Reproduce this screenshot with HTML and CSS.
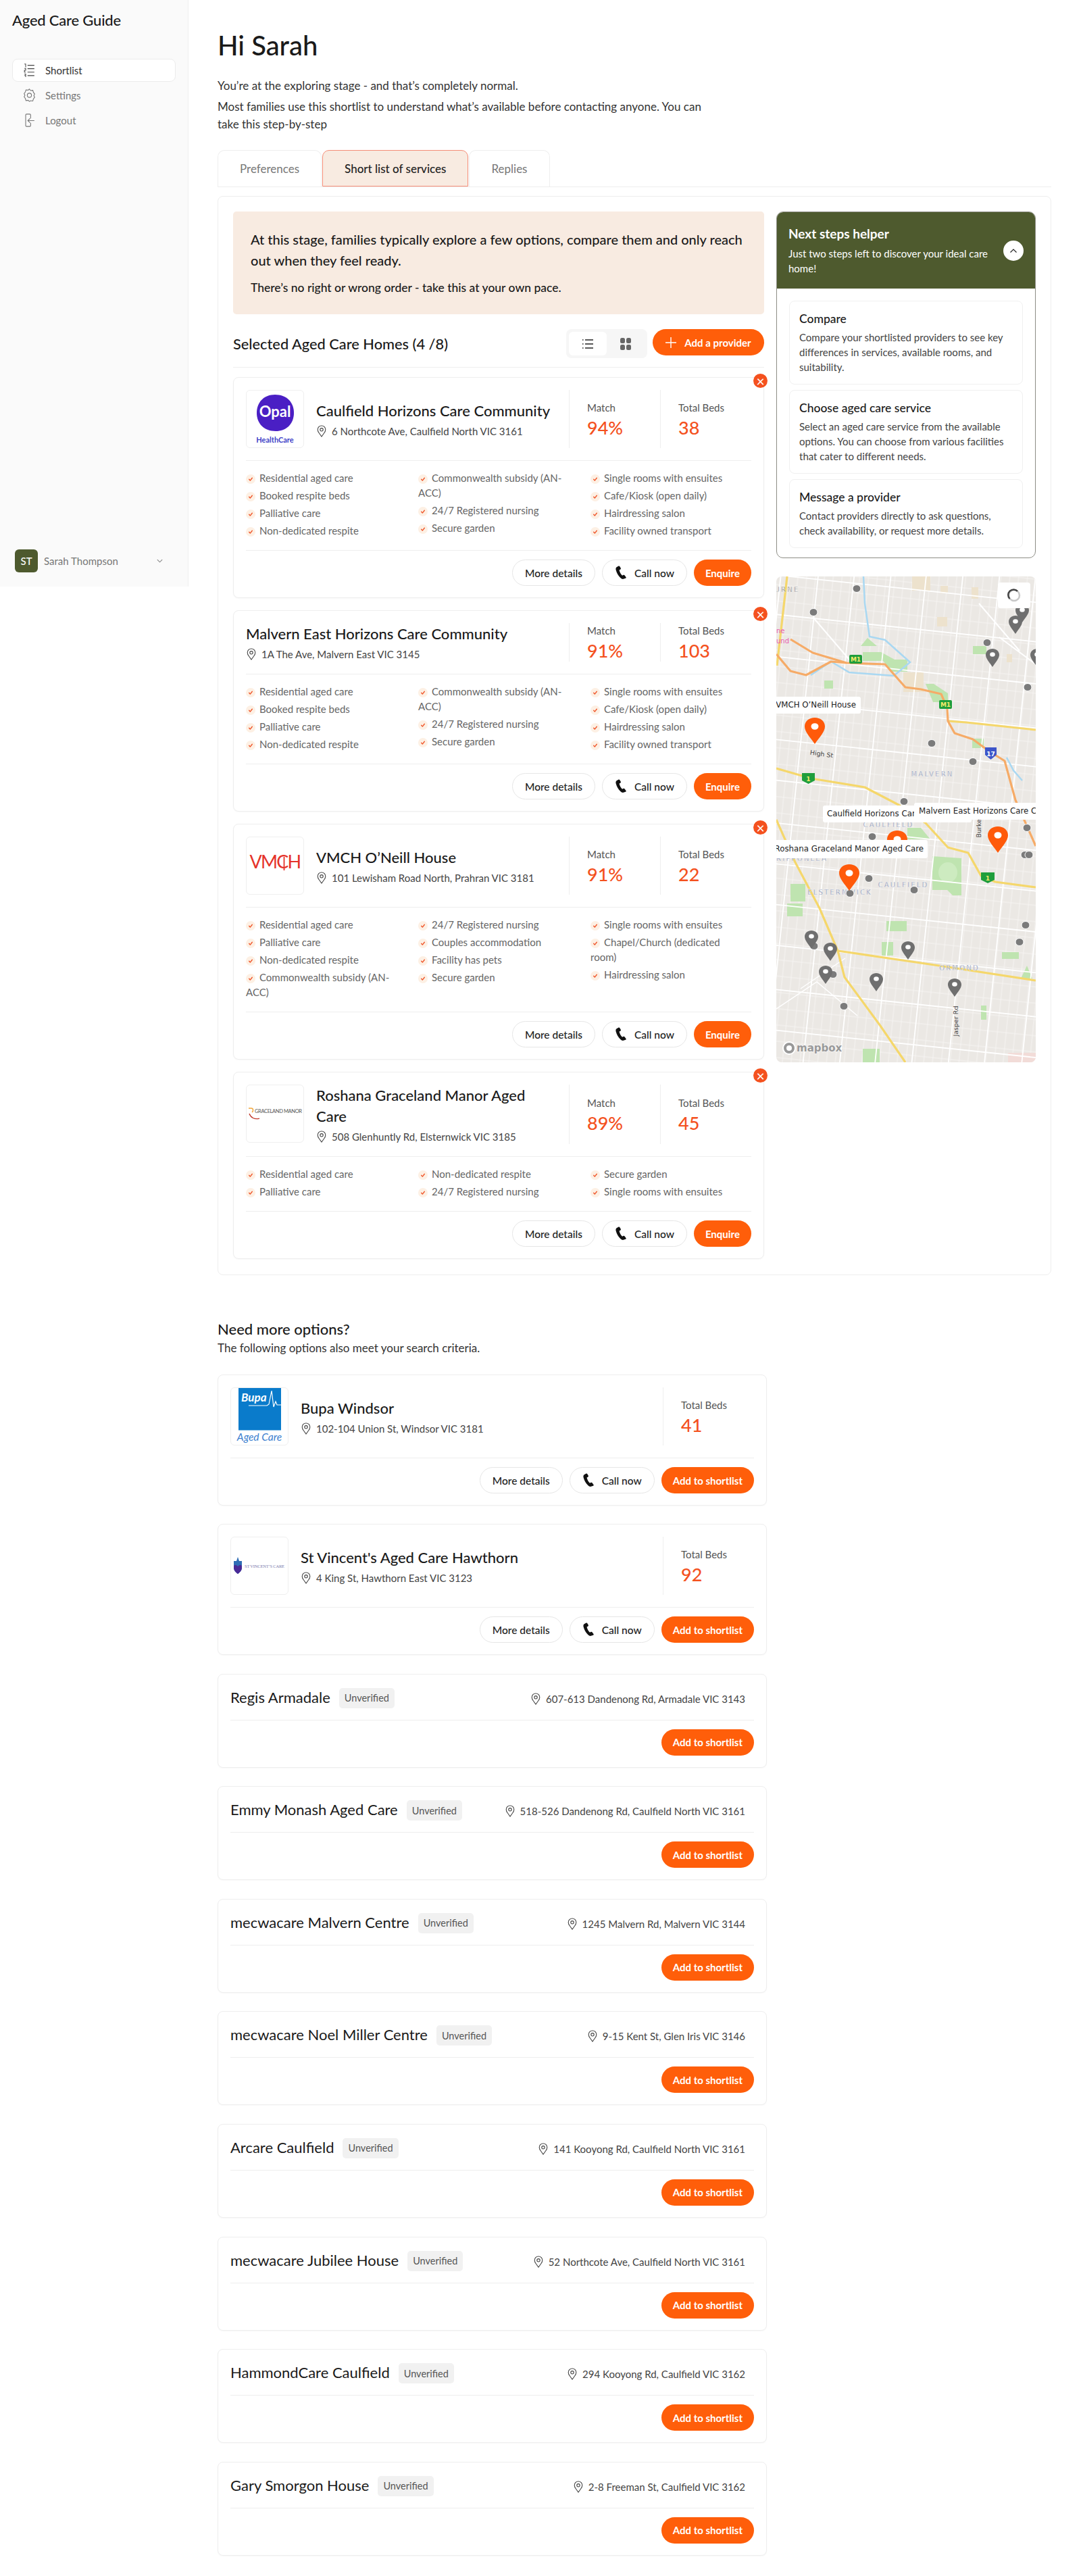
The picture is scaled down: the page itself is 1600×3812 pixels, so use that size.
FILE: index.html
```html
<!DOCTYPE html>
<html lang="en">
<head>
    <meta charset="UTF-8">
    <meta name="viewport" content="width=device-width, initial-scale=1.0">
    <title>Aged Care Guide - Shortlist</title>
    <link rel="stylesheet" href="styles.css">
</head>
<body>
    <!-- shared icons -->
    <svg class="sprite" width="0" height="0">
        <symbol id="pin" viewBox="0 0 14 18"><path d="M7 1C3.7 1 1.2 3.5 1.2 6.7c0 2.1.9 3.7 2.2 5.3L7 17l3.6-5c1.3-1.6 2.2-3.2 2.2-5.3C12.8 3.5 10.3 1 7 1z" fill="none" stroke="currentColor" stroke-width="1.1"/><circle cx="7" cy="6.8" r="2.2" fill="none" stroke="currentColor" stroke-width="1.1"/></symbol>
        <symbol id="check" viewBox="0 0 14 14"><circle cx="7" cy="7" r="7" fill="#fdf0e4"/><path d="M4.7 7.3l1.6 1.8 3-3.8" fill="none" stroke="#f0562a" stroke-width="1.4" stroke-linecap="round" stroke-linejoin="round"/></symbol>
        <symbol id="phone" viewBox="0 0 22 24"><path d="M5.8 1.2L2.9 2.9C1.6 3.7 1.3 5.6 1.8 7.5c1.3 4.800 3.700 9 7.300 12.700 1.500 1.500 3.300 2.500 4.900 2.100l3.400-1.100c1-.4 1.300-1.300.7-2.100l-2.200-3c-.5-.7-1.300-.8-2-.4l-1.700 1c-2.600-2.300-4.300-5.400-5-9l1.800-1c.7-.4 1-1.200.7-2L8.200 2c-.4-1-1.500-1.400-2.400-.8z" fill="#111"/></symbol>
        <symbol id="gpin" viewBox="0 0 20 27"><path d="M10 0C4.500 0 0 3.800 0 9c0 5.500 5.500 11 10 18 4.500-7 10-12.500 10-18C20 3.800 15.500 0 10 0z" fill="#6f6f6f"/><ellipse cx="10" cy="8.5" rx="3.8" ry="3.3" fill="#fff"/></symbol>
        <symbol id="opin" viewBox="0 0 30 39"><path d="M15 0C6.700 0 0 5.200 0 13c0 8 8 16 15 26 7-10 15-18 15-26C30 5.200 23.300 0 15 0z" fill="#ff5a0a"/><ellipse cx="15" cy="13" rx="5.500" ry="4.800" fill="#fff"/></symbol>
    </svg>

    <div class="layout">
        <aside class="sidebar">
            <div class="brand">Aged Care Guide</div>
            <nav class="side-nav">
                <a class="nav-item active">
                    <svg class="nav-icon" viewBox="0 0 18 24" fill="none" stroke="#444" stroke-width="1.3"><path d="M6 4h11M6 9.500h11M6 15h11M6 20.500h11"/><path d="M1 2h2v5M1 9h2v3H1v3h2M1 18h2v5M1 20.500h2" stroke-width="1.1"/></svg>
                    Shortlist
                </a>
                <a class="nav-item">
                    <svg class="nav-icon" viewBox="0 0 18 24" fill="none" stroke="#777" stroke-width="1.2"><path d="M9 2l2 2.400 3.500-.4 1 3.300 2 2.700-1.300 2.500 1.300 2.700-2 2.700-1 3.300-3.500-.4L9 22l-2-1.900-3.500.4-1-3.300-2-2.700L1.800 12 .5 9.300l2-2.700 1-3.300 3.500.4z"/><circle cx="9" cy="12" r="3.4"/></svg>
                    Settings
                </a>
                <a class="nav-item">
                    <svg class="nav-icon" viewBox="0 0 18 24" fill="none" stroke="#777" stroke-width="1.2"><path d="M11 9V3.500c0-1-.8-1.500-1.500-1.500H4.500C3.500 2 3 2.800 3 3.500v17c0 1 .7 1.500 1.500 1.500h5c1 0 1.500-.7 1.500-1.500V16"/><path d="M17 12.500H7M10 9l-3.500 3.500L10 16"/></svg>
                    Logout
                </a>
            </nav>
            <div class="side-user">
                <span class="avatar">ST</span>
                <span class="user-name">Sarah Thompson</span>
                <svg class="user-chevron" viewBox="0 0 12 8" fill="none" stroke="#888" stroke-width="1.2"><path d="M2 2l4 4 4-4"/></svg>
            </div>
        </aside>

        <main class="main">
            <h1>Hi Sarah</h1>
            <p class="intro first">You’re at the exploring stage - and that’s completely normal.</p>
            <p class="intro">Most families use this shortlist to understand what’s available before contacting anyone. You can take this step-by-step</p>

            <div class="tabs">
                <a class="tab">Preferences</a>
                <a class="tab active">Short list of services</a>
                <a class="tab">Replies</a>
            </div>

            <section class="panel">
                <div class="panel-left">
                    <div class="alert">
                        <p class="alert-main">At this stage, families typically explore a few options, compare them and only reach out when they feel ready.</p>
                        <p class="alert-sub">There’s no right or wrong order - take this at your own pace.</p>
                    </div>

                    <div class="list-head">
                        <h2>Selected Aged Care Homes (4 /8)</h2>
                        <div class="view-toggle">
                            <span class="toggle-btn on">
                                <svg viewBox="0 0 18 18" fill="none" stroke="#222" stroke-width="1.3"><path d="M5 3h12M5 9h12M5 15h12M1 3h1.500M1 9h1.500M1 15h1.500"/></svg>
                            </span>
                            <span class="toggle-btn">
                                <svg viewBox="0 0 18 18" fill="#666"><rect x="1" y="0" width="7" height="8" rx="2.5"/><rect x="10" y="0" width="7" height="8" rx="2.5"/><rect x="1" y="10" width="7" height="8" rx="2.5"/><rect x="10" y="10" width="7" height="8" rx="2.5"/></svg>
                            </span>
                        </div>
                        <a class="btn primary add-provider">
                            <svg viewBox="0 0 16 16" fill="none" stroke="#fff" stroke-width="1.4"><path d="M8 0v16M0 8h16"/></svg>
                            Add a provider
                        </a>
                    </div>

                    <article class="card">
                        <span class="remove">×</span>
                        <div class="card-top">
                            <div class="logo-box">
                                <svg viewBox="0 0 84 84" width="84" height="84">
                                    <path d="M42 6c17 0 28 11 28 27 0 17-12 27-27 27C26 60 15 49 15 33 15 17 26 6 42 6z" fill="#4a1fc4"/>
                                    <text x="42" y="39" text-anchor="middle" class="lg-opal">Opal</text>
                                    <text x="42" y="77" text-anchor="middle" class="lg-health">HealthCare</text>
                                </svg>
                            </div>
                            <div class="home-info">
                                <h3>Caulfield Horizons Care Community</h3>
                                <div class="address"><svg class="pin"><use href="#pin"/></svg>6 Northcote Ave, Caulfield North VIC 3161</div>
                            </div>
                            <div class="stat"><span class="stat-label">Match</span><span class="stat-value">94%</span></div>
                            <div class="stat"><span class="stat-label">Total Beds</span><span class="stat-value">38</span></div>
                        </div>
                        <div class="features">
                            <ul>
                                <li><svg class="tick"><use href="#check"/></svg>Residential aged care</li>
                                <li><svg class="tick"><use href="#check"/></svg>Booked respite beds</li>
                                <li><svg class="tick"><use href="#check"/></svg>Palliative care</li>
                                <li><svg class="tick"><use href="#check"/></svg>Non-dedicated respite</li>
                            </ul>
                            <ul>
                                <li><svg class="tick"><use href="#check"/></svg>Commonwealth subsidy (AN-ACC)</li>
                                <li><svg class="tick"><use href="#check"/></svg>24/7 Registered nursing</li>
                                <li><svg class="tick"><use href="#check"/></svg>Secure garden</li>
                            </ul>
                            <ul>
                                <li><svg class="tick"><use href="#check"/></svg>Single rooms with ensuites</li>
                                <li><svg class="tick"><use href="#check"/></svg>Cafe/Kiosk (open daily)</li>
                                <li><svg class="tick"><use href="#check"/></svg>Hairdressing salon</li>
                                <li><svg class="tick"><use href="#check"/></svg>Facility owned transport</li>
                            </ul>
                        </div>
                        <div class="actions">
                            <a class="btn ghost">More details</a>
                            <a class="btn ghost"><svg class="phone"><use href="#phone"/></svg>Call now</a>
                            <a class="btn primary">Enquire</a>
                        </div>
                    </article>

                    <article class="card">
                        <span class="remove">×</span>
                        <div class="card-top">
                            <div class="home-info">
                                <h3>Malvern East Horizons Care Community</h3>
                                <div class="address"><svg class="pin"><use href="#pin"/></svg>1A The Ave, Malvern East VIC 3145</div>
                            </div>
                            <div class="stat"><span class="stat-label">Match</span><span class="stat-value">91%</span></div>
                            <div class="stat"><span class="stat-label">Total Beds</span><span class="stat-value">103</span></div>
                        </div>
                        <div class="features">
                            <ul>
                                <li><svg class="tick"><use href="#check"/></svg>Residential aged care</li>
                                <li><svg class="tick"><use href="#check"/></svg>Booked respite beds</li>
                                <li><svg class="tick"><use href="#check"/></svg>Palliative care</li>
                                <li><svg class="tick"><use href="#check"/></svg>Non-dedicated respite</li>
                            </ul>
                            <ul>
                                <li><svg class="tick"><use href="#check"/></svg>Commonwealth subsidy (AN-ACC)</li>
                                <li><svg class="tick"><use href="#check"/></svg>24/7 Registered nursing</li>
                                <li><svg class="tick"><use href="#check"/></svg>Secure garden</li>
                            </ul>
                            <ul>
                                <li><svg class="tick"><use href="#check"/></svg>Single rooms with ensuites</li>
                                <li><svg class="tick"><use href="#check"/></svg>Cafe/Kiosk (open daily)</li>
                                <li><svg class="tick"><use href="#check"/></svg>Hairdressing salon</li>
                                <li><svg class="tick"><use href="#check"/></svg>Facility owned transport</li>
                            </ul>
                        </div>
                        <div class="actions">
                            <a class="btn ghost">More details</a>
                            <a class="btn ghost"><svg class="phone"><use href="#phone"/></svg>Call now</a>
                            <a class="btn primary">Enquire</a>
                        </div>
                    </article>

                    <article class="card">
                        <span class="remove">×</span>
                        <div class="card-top">
                            <div class="logo-box">
                                <svg viewBox="0 0 84 84" width="84" height="84">
                                    <text x="42" y="46" text-anchor="middle" class="lg-vmch">VMCH</text>
                                    <path d="M55.5 29v20" stroke="#e5332a" stroke-width="1.8"/>
                                </svg>
                            </div>
                            <div class="home-info">
                                <h3>VMCH O’Neill House</h3>
                                <div class="address"><svg class="pin"><use href="#pin"/></svg>101 Lewisham Road North, Prahran VIC 3181</div>
                            </div>
                            <div class="stat"><span class="stat-label">Match</span><span class="stat-value">91%</span></div>
                            <div class="stat"><span class="stat-label">Total Beds</span><span class="stat-value">22</span></div>
                        </div>
                        <div class="features">
                            <ul>
                                <li><svg class="tick"><use href="#check"/></svg>Residential aged care</li>
                                <li><svg class="tick"><use href="#check"/></svg>Palliative care</li>
                                <li><svg class="tick"><use href="#check"/></svg>Non-dedicated respite</li>
                                <li><svg class="tick"><use href="#check"/></svg>Commonwealth subsidy (AN-ACC)</li>
                            </ul>
                            <ul>
                                <li><svg class="tick"><use href="#check"/></svg>24/7 Registered nursing</li>
                                <li><svg class="tick"><use href="#check"/></svg>Couples accommodation</li>
                                <li><svg class="tick"><use href="#check"/></svg>Facility has pets</li>
                                <li><svg class="tick"><use href="#check"/></svg>Secure garden</li>
                            </ul>
                            <ul>
                                <li><svg class="tick"><use href="#check"/></svg>Single rooms with ensuites</li>
                                <li><svg class="tick"><use href="#check"/></svg>Chapel/Church (dedicated room)</li>
                                <li><svg class="tick"><use href="#check"/></svg>Hairdressing salon</li>
                            </ul>
                        </div>
                        <div class="actions">
                            <a class="btn ghost">More details</a>
                            <a class="btn ghost"><svg class="phone"><use href="#phone"/></svg>Call now</a>
                            <a class="btn primary">Enquire</a>
                        </div>
                    </article>

                    <article class="card">
                        <span class="remove">×</span>
                        <div class="card-top">
                            <div class="logo-box">
                                <svg viewBox="0 0 84 84" width="84" height="84">
                                    <path d="M3 34h4c3 0 3.500 4 1 6" fill="none" stroke="#f0a63c" stroke-width="1.5"/>
                                    <path d="M4 42c2 6 8 9 15 7" fill="none" stroke="#c0392b" stroke-width="1.3"/>
                                    <text x="12" y="41" class="lg-grace" textLength="70">GRACELAND MANOR</text>
                                </svg>
                            </div>
                            <div class="home-info">
                                <h3>Roshana Graceland Manor Aged Care</h3>
                                <div class="address"><svg class="pin"><use href="#pin"/></svg>508 Glenhuntly Rd, Elsternwick VIC 3185</div>
                            </div>
                            <div class="stat"><span class="stat-label">Match</span><span class="stat-value">89%</span></div>
                            <div class="stat"><span class="stat-label">Total Beds</span><span class="stat-value">45</span></div>
                        </div>
                        <div class="features">
                            <ul>
                                <li><svg class="tick"><use href="#check"/></svg>Residential aged care</li>
                                <li><svg class="tick"><use href="#check"/></svg>Palliative care</li>
                            </ul>
                            <ul>
                                <li><svg class="tick"><use href="#check"/></svg>Non-dedicated respite</li>
                                <li><svg class="tick"><use href="#check"/></svg>24/7 Registered nursing</li>
                            </ul>
                            <ul>
                                <li><svg class="tick"><use href="#check"/></svg>Secure garden</li>
                                <li><svg class="tick"><use href="#check"/></svg>Single rooms with ensuites</li>
                            </ul>
                        </div>
                        <div class="actions">
                            <a class="btn ghost">More details</a>
                            <a class="btn ghost"><svg class="phone"><use href="#phone"/></svg>Call now</a>
                            <a class="btn primary">Enquire</a>
                        </div>
                    </article>
                </div>

                <div class="panel-right">
                    <div class="helper">
                        <div class="helper-head">
                            <div>
                                <h4>Next steps helper</h4>
                                <p>Just two steps left to discover your ideal care home!</p>
                            </div>
                            <span class="helper-toggle">
                                <svg viewBox="0 0 12 8" fill="none" stroke="#222" stroke-width="1.2"><path d="M1.5 6.5L6 2l4.5 4.5"/></svg>
                            </span>
                        </div>
                        <div class="helper-body">
                            <div class="step">
                                <h5>Compare</h5>
                                <p>Compare your shortlisted providers to see key differences in services, available rooms, and suitability.</p>
                            </div>
                            <div class="step">
                                <h5>Choose aged care service</h5>
                                <p>Select an aged care service from the available options. You can choose from various facilities that cater to different needs.</p>
                            </div>
                            <div class="step">
                                <h5>Message a provider</h5>
                                <p>Contact providers directly to ask questions, check availability, or request more details.</p>
                            </div>
                        </div>
                    </div>

                    <div class="map">
                        <svg viewBox="0 0 384 719" width="384" height="719">
                            <defs>
                                <pattern id="minor" width="13" height="24" patternUnits="userSpaceOnUse" patternTransform="rotate(6)">
                                    <path d="M6 0v24M0 12h13" stroke="#f6f4f2" stroke-width="1" fill="none"/>
                                </pattern>
                            </defs>
                            <rect width="384" height="719" fill="#ebe8e4"/>
                            <rect width="384" height="719" fill="url(#minor)"/>

                            <!-- parks and land -->
                            <g fill="#ede2cd">
                                <rect x="201" y="0" width="27" height="21"/>
                                <rect x="188" y="142" width="30" height="29"/>
                                <rect x="243" y="14" width="11" height="11"/>
                                <rect x="289" y="16" width="10" height="17"/>
                                <rect x="238" y="60" width="15" height="14"/>
                                <rect x="341" y="115" width="8" height="12"/>
                            </g>
                            <g fill="#bfe4b0">
                                <path d="M125 103l10-12 14 12z"/>
                                <rect x="71" y="154" width="13" height="12"/>
                                <path d="M128 112h27l20 11h19v18h-22l-14-16h-30z"/>
                                <path d="M221 159h12l21 14v13h-22z"/>
                                <rect x="291" y="103" width="20" height="12"/>
                                <path d="M231 414l43 3v55h-13l-8-8h-22z"/>
                                <path d="M194 372h20l14 17h-34z"/>
                                <rect x="21" y="455" width="22" height="26"/>
                                <rect x="16" y="484" width="23" height="19"/>
                                <rect x="163" y="510" width="30" height="15"/>
                                <rect x="156" y="541" width="17" height="20"/>
                                <rect x="334" y="556" width="25" height="10"/>
                                <path d="M362 595l9-19 8 19z"/>
                                <rect x="303" y="635" width="8" height="21"/>
                                <rect x="128" y="699" width="25" height="20"/>
                                <rect x="290" y="240" width="17" height="14"/>
                            </g>
                            <ellipse cx="254" cy="438" rx="14" ry="15" fill="#cdebc0"/>
                            <rect x="343" y="705" width="41" height="14" fill="#f2dcd8"/>

                            <!-- main streets -->
                            <g transform="rotate(6 192 360)" stroke="#fff" stroke-width="1.8" fill="none">
                                <path d="M-30 -60V800M25 -60V800M78 -60V800M132 -60V800M184 -60V800M238 -60V800M292 -60V800M345 -60V800M400 -60V800"/>
                                <path d="M-60 20H460M-60 78H460M-60 140H460M-60 205H460M-60 262H460M-60 322H460M-60 385H460M-60 445H460M-60 505H460M-60 565H460M-60 630H460M-60 690H460"/>
                            </g>
                            <path d="M0 640l60-40 60 50M36 610l66-45" stroke="#fff" stroke-width="1.5" fill="none"/>
                            <path d="M54 60l60 70M330 90l54 40M300 40l60 70" stroke="#fff" stroke-width="2" fill="none"/>

                            <!-- water -->
                            <g fill="none" stroke="#a9d8f2" stroke-width="2.5">
                                <path d="M129 0l2 40 7 49 23 5 37 33-24 20-66-5-27-16-30 20"/>
                                <path d="M341 268l10 19 13 15"/>
                            </g>

                            <!-- highways -->
                            <g fill="none" stroke="#f5d76b" stroke-width="3.2" stroke-linejoin="round">
                                <path d="M0 284l38 11 20 5 73 12 50 26 40 27 33 36 30 8 19 34 21 9 60 8"/>
                                <path d="M0 360l28 63 36 68 27 63 10 39 53 72 37 54"/>
                                <path d="M16 0L1 132"/>
                                <path d="M91 554l150 22 143 22"/>
                                <path d="M254 214l27 2 103 11"/>
                            </g>
                            <g fill="none" stroke="#f6ab67" stroke-width="3.2" stroke-linejoin="round">
                                <path d="M21 93l33 20 50 15 57 2 30 34 23 3 30 7 9 21 1 19 10 18 27 9 23 17 24 15 16 58 30 68"/>
                                <path d="M0 115l21 25 23 6 37-20 23 2"/>
                            </g>

                            <!-- road shields -->
                            <g>
                                <rect x="108" y="116" width="19" height="13" rx="2" fill="#1f9e3c"/>
                                <text x="117.5" y="126" text-anchor="middle" class="shield-text">M1</text>
                                <rect x="241" y="183" width="19" height="13" rx="2" fill="#1f9e3c"/>
                                <text x="250.5" y="193" text-anchor="middle" class="shield-text">M1</text>
                                <path d="M38 291h19v11l-9.500 5-9.500-5z" fill="#1f9e3c"/>
                                <text x="47.5" y="303" text-anchor="middle" class="shield-text">1</text>
                                <path d="M303 438h20v11l-10 5-10-5z" fill="#1f9e3c"/>
                                <text x="313" y="450" text-anchor="middle" class="shield-text">1</text>
                                <path d="M309 253h17v11l-8.500 7-8.500-7z" fill="#3d55c9"/>
                                <text x="317.5" y="266" text-anchor="middle" class="shield-text white">17</text>
                            </g>

                            <!-- place names -->
                            <text x="16" y="23" text-anchor="middle" class="place grey">URNE</text>
                            <text x="0" y="84" class="poi">ne</text>
                            <text x="0" y="99" class="poi">und</text>
                            <text x="231" y="296" text-anchor="middle" class="place">MALVERN</text>
                            <text x="188" y="460" text-anchor="middle" class="place">CAULFIELD</text>
                            <text x="94" y="471" text-anchor="middle" class="place">ELSTERNWICK</text>
                            <text x="271" y="583" text-anchor="middle" class="place">ORMOND</text>
                            <text x="166" y="371" text-anchor="middle" class="place">CAULFIELD</text>
                            <text x="38" y="421" text-anchor="middle" class="place">RIPPONLEA</text>
                            <text x="67" y="266" text-anchor="middle" transform="rotate(8 67 263)" class="road-name">High St</text>
                            <text x="266" y="661" text-anchor="middle" transform="rotate(-90 266 658)" class="road-name">Jasper Rd</text>
                            <text x="300" y="368" text-anchor="middle" transform="rotate(-90 300 365)" class="road-name">Burke Rd</text>

                            <!-- grey dots -->
                            <g fill="#7b7b7b" stroke="#fff" stroke-width="1">
                                <ellipse cx="119" cy="18" rx="6" ry="5.5"/>
                                <ellipse cx="55" cy="53" rx="6" ry="5.5"/>
                                <ellipse cx="312" cy="98" rx="6" ry="5.5"/>
                                <ellipse cx="372" cy="164" rx="6" ry="5.5"/>
                                <ellipse cx="230" cy="247" rx="6" ry="5.5"/>
                                <ellipse cx="291" cy="274" rx="6" ry="5.5"/>
                                <ellipse cx="189" cy="333" rx="6" ry="5.5"/>
                                <ellipse cx="142" cy="385" rx="6" ry="5.5"/>
                                <ellipse cx="371" cy="372" rx="6" ry="5.5"/>
                                <ellipse cx="368" cy="412" rx="6" ry="5.5"/>
                                <ellipse cx="374" cy="412" rx="6" ry="5.5"/>
                                <ellipse cx="137" cy="447" rx="6" ry="5.5"/>
                                <ellipse cx="109" cy="469" rx="6" ry="5.5"/>
                                <ellipse cx="204" cy="464" rx="6" ry="5.5"/>
                                <ellipse cx="369" cy="516" rx="6" ry="5.5"/>
                                <ellipse cx="360" cy="541" rx="6" ry="5.5"/>
                                <ellipse cx="56" cy="547" rx="6" ry="5.5"/>
                                <ellipse cx="84" cy="589" rx="6" ry="5.5"/>
                                <ellipse cx="100" cy="636" rx="6" ry="5.5"/>
                            </g>

                            <!-- grey pins -->
                            <use href="#gpin" x="354" y="41" width="20" height="27"/>
                            <use href="#gpin" x="344" y="58" width="20" height="27"/>
                            <use href="#gpin" x="310" y="107" width="20" height="27"/>
                            <use href="#gpin" x="376" y="107" width="20" height="27"/>
                            <use href="#gpin" x="42" y="524" width="20" height="27"/>
                            <use href="#gpin" x="70" y="542" width="20" height="27"/>
                            <use href="#gpin" x="63" y="576" width="20" height="27"/>
                            <use href="#gpin" x="138" y="587" width="20" height="27"/>
                            <use href="#gpin" x="185" y="540" width="20" height="27"/>
                            <use href="#gpin" x="254" y="595" width="20" height="27"/>

                            <!-- shortlisted pins -->
                            <use href="#opin" x="42" y="209" width="30" height="39"/>
                            <use href="#opin" x="164" y="376" width="30" height="39"/>
                            <use href="#opin" x="313" y="370" width="30" height="39"/>
                            <use href="#opin" x="93" y="426" width="30" height="39"/>

                            <!-- marker labels -->
                            <rect x="-6" y="178" width="131" height="25" rx="3" fill="#fff"/>
                            <text x="118" y="194" text-anchor="end" class="marker-label">VMCH O’Neill House</text>
                            <rect x="69" y="339" width="220" height="25" rx="3" fill="#fff"/>
                            <text x="75" y="355" class="marker-label">Caulfield Horizons Care Community</text>
                            <rect x="204" y="335" width="240" height="25" rx="3" fill="#fff"/>
                            <text x="211" y="351" class="marker-label">Malvern East Horizons Care Community</text>
                            <rect x="-6" y="390" width="230" height="27" rx="3" fill="#fff"/>
                            <text x="218" y="407" text-anchor="end" class="marker-label">Roshana Graceland Manor Aged Care</text>

                            <!-- loading box -->
                            <rect x="328" y="9" width="48" height="38" rx="4" fill="#fff"/>
                            <circle cx="352" cy="28" r="8" fill="none" stroke="#c8c8c8" stroke-width="2.5"/>
                            <path d="M357 21.800A8 8 0 0 0 345.500 33" fill="none" stroke="#444" stroke-width="2.5"/>

                            <!-- attribution -->
                            <circle cx="19" cy="698" r="9" fill="#999" stroke="#fff" stroke-width="2"/>
                            <circle cx="19" cy="698" r="4" fill="#fff"/>
                            <text x="30" y="703" class="mapbox">mapbox</text>
                        </svg>
                    </div>
                </div>
            </section>

            <section class="more">
                <h2 class="more-title">Need more options?</h2>
                <p class="more-sub">The following options also meet your search criteria.</p>

                <article class="card wide">
                    <div class="card-top">
                        <div class="logo-box">
                            <svg viewBox="0 0 84 84" width="84" height="84">
                                <rect x="11" y="0" width="63" height="62.5" fill="#0a7bcb"/>
                                <text x="15" y="20" class="lg-bupa">Bupa</text>
                                <path d="M26 26h27l3-2 4-20 3 24 3-8 2 5h6" fill="none" stroke="#fff" stroke-width="1.2"/>
                                <text x="42" y="78" text-anchor="middle" class="lg-aged">Aged Care</text>
                            </svg>
                        </div>
                        <div class="home-info">
                            <h3>Bupa Windsor</h3>
                            <div class="address"><svg class="pin"><use href="#pin"/></svg>102-104 Union St, Windsor VIC 3181</div>
                        </div>
                        <div class="stat"><span class="stat-label">Total Beds</span><span class="stat-value">41</span></div>
                    </div>
                    <div class="actions">
                        <a class="btn ghost">More details</a>
                        <a class="btn ghost"><svg class="phone"><use href="#phone"/></svg>Call now</a>
                        <a class="btn primary">Add to shortlist</a>
                    </div>
                </article>

                <article class="card wide">
                    <div class="card-top">
                        <div class="logo-box">
                            <svg viewBox="0 0 84 84" width="84" height="84">
                                <path d="M4 35h4l2-6 2 6h4v10c0 4-3 7-6 9-3-2-6-5-6-9z" fill="#2f6db5"/>
                                <path d="M4 43c1-3 3-3 6 0 3-3 5-3 6 0v2c0 4-3 7-6 9-3-2-6-5-6-9z" fill="#4a2a96"/>
                                <text x="20" y="45" class="lg-vincent" textLength="59">ST VINCENT’S CARE</text>
                            </svg>
                        </div>
                        <div class="home-info">
                            <h3>St Vincent's Aged Care Hawthorn</h3>
                            <div class="address"><svg class="pin"><use href="#pin"/></svg>4 King St, Hawthorn East VIC 3123</div>
                        </div>
                        <div class="stat"><span class="stat-label">Total Beds</span><span class="stat-value">92</span></div>
                    </div>
                    <div class="actions">
                        <a class="btn ghost">More details</a>
                        <a class="btn ghost"><svg class="phone"><use href="#phone"/></svg>Call now</a>
                        <a class="btn primary">Add to shortlist</a>
                    </div>
                </article>

                <article class="card wide plain">
                    <div class="plain-top">
                        <h3>Regis Armadale</h3>
                        <span class="badge">Unverified</span>
                        <div class="address"><svg class="pin"><use href="#pin"/></svg>607-613 Dandenong Rd, Armadale VIC 3143</div>
                    </div>
                    <div class="actions"><a class="btn primary">Add to shortlist</a></div>
                </article>

                <article class="card wide plain">
                    <div class="plain-top">
                        <h3>Emmy Monash Aged Care</h3>
                        <span class="badge">Unverified</span>
                        <div class="address"><svg class="pin"><use href="#pin"/></svg>518-526 Dandenong Rd, Caulfield North VIC 3161</div>
                    </div>
                    <div class="actions"><a class="btn primary">Add to shortlist</a></div>
                </article>

                <article class="card wide plain">
                    <div class="plain-top">
                        <h3>mecwacare Malvern Centre</h3>
                        <span class="badge">Unverified</span>
                        <div class="address"><svg class="pin"><use href="#pin"/></svg>1245 Malvern Rd, Malvern VIC 3144</div>
                    </div>
                    <div class="actions"><a class="btn primary">Add to shortlist</a></div>
                </article>

                <article class="card wide plain">
                    <div class="plain-top">
                        <h3>mecwacare Noel Miller Centre</h3>
                        <span class="badge">Unverified</span>
                        <div class="address"><svg class="pin"><use href="#pin"/></svg>9-15 Kent St, Glen Iris VIC 3146</div>
                    </div>
                    <div class="actions"><a class="btn primary">Add to shortlist</a></div>
                </article>

                <article class="card wide plain">
                    <div class="plain-top">
                        <h3>Arcare Caulfield</h3>
                        <span class="badge">Unverified</span>
                        <div class="address"><svg class="pin"><use href="#pin"/></svg>141 Kooyong Rd, Caulfield North VIC 3161</div>
                    </div>
                    <div class="actions"><a class="btn primary">Add to shortlist</a></div>
                </article>

                <article class="card wide plain">
                    <div class="plain-top">
                        <h3>mecwacare Jubilee House</h3>
                        <span class="badge">Unverified</span>
                        <div class="address"><svg class="pin"><use href="#pin"/></svg>52 Northcote Ave, Caulfield North VIC 3161</div>
                    </div>
                    <div class="actions"><a class="btn primary">Add to shortlist</a></div>
                </article>

                <article class="card wide plain">
                    <div class="plain-top">
                        <h3>HammondCare Caulfield</h3>
                        <span class="badge">Unverified</span>
                        <div class="address"><svg class="pin"><use href="#pin"/></svg>294 Kooyong Rd, Caulfield VIC 3162</div>
                    </div>
                    <div class="actions"><a class="btn primary">Add to shortlist</a></div>
                </article>

                <article class="card wide plain">
                    <div class="plain-top">
                        <h3>Gary Smorgon House</h3>
                        <span class="badge">Unverified</span>
                        <div class="address"><svg class="pin"><use href="#pin"/></svg>2-8 Freeman St, Caulfield VIC 3162</div>
                    </div>
                    <div class="actions"><a class="btn primary">Add to shortlist</a></div>
                </article>
            </section>
        </main>
    </div>
</body>
</html>
```

FILE: styles.css
```css
:root {
    --orange: #ff5e0a;
    --coral: #f4511e;
    --olive: #4e5a2e;
    --line: #eeeeee;
    --cream: #f8ebe1;
    --text: #1a1a1a;
    --muted: #666666;
}

* {
    box-sizing: border-box;
}

body {
    margin: 0;
    font-family: 'Lato', 'Liberation Sans', sans-serif;
    color: var(--text);
    background-color: #fff;
}

h1, h2, h3, h4, h5, p, ul {
    margin: 0;
    padding: 0;
}

ul {
    list-style: none;
}

.sprite {
    position: absolute;
}

.layout {
    display: flex;
    align-items: flex-start;
}

/* sidebar */
.sidebar {
    width: 279px;
    height: 868px;
    flex-shrink: 0;
    display: flex;
    flex-direction: column;
    padding: 15px 18px 21px;
    background-color: #fafafa;
    border-right: 1px solid #f0f0f0;
}

.brand {
    font-size: 22px;
    font-weight: 500;
    line-height: 30px;
    letter-spacing: -0.2px;
}

.side-nav {
    margin-top: 42px;
    display: flex;
    flex-direction: column;
    gap: 3px;
}

.nav-item {
    height: 34px;
    display: flex;
    align-items: center;
    gap: 15px;
    padding-left: 16px;
    font-size: 15px;
    color: #777;
    border: 1px solid transparent;
    border-radius: 8px;
}

.nav-item.active {
    color: #333;
    background-color: #fff;
    border-color: #ececec;
}

.nav-icon {
    width: 17px;
    height: 22px;
}

.side-user {
    margin-top: auto;
    display: flex;
    align-items: center;
    padding-left: 4px;
}

.avatar {
    width: 34px;
    height: 34px;
    display: flex;
    align-items: center;
    justify-content: center;
    background-color: var(--olive);
    color: #fff;
    font-size: 15px;
    font-weight: 500;
    border-radius: 6px;
}

.user-name {
    margin-left: 9px;
    font-size: 15px;
    color: #777;
}

.user-chevron {
    width: 11px;
    height: 8px;
    margin-left: 56px;
}

/* main column */
.main {
    width: 1278px;
    padding: 43px 0 31px 43px;
}

h1 {
    font-size: 40px;
    font-weight: 500;
    line-height: 48px;
    margin-bottom: 23px;
}

.intro {
    max-width: 740px;
    font-size: 17px;
    line-height: 26px;
    color: #333;
}

.intro.first {
    margin-bottom: 5px;
}

.tabs {
    display: flex;
    gap: 1px;
    width: 1234px;
    height: 55px;
    margin-top: 25px;
    border-bottom: 1px solid var(--line);
}

.tab {
    display: flex;
    align-items: center;
    padding: 0 32px;
    font-size: 17px;
    color: #777;
    border: 1px solid var(--line);
    border-bottom: none;
    border-radius: 10px 10px 0 0;
}

.tab.active {
    background-color: var(--cream);
    border: 1px solid #f58d78;
    font-weight: 500;
    color: #222;
}

.panel {
    display: flex;
    gap: 18px;
    width: 1234px;
    margin-top: 13px;
    padding: 22px 22px 23px;
    border: 1px solid var(--line);
    border-radius: 8px;
}

.panel-left {
    width: 786px;
}

.panel-right {
    width: 384px;
}

.alert {
    height: 152px;
    padding: 26px 26px 0;
    background-color: var(--cream);
    border-radius: 5px;
}

.alert-main {
    font-size: 20px;
    font-weight: 500;
    line-height: 31px;
}

.alert-sub {
    margin-top: 12px;
    font-size: 17.5px;
    font-weight: 500;
    line-height: 26px;
}

.list-head {
    display: flex;
    align-items: flex-start;
    margin-top: 22px;
    padding-bottom: 13px;
    border-bottom: 1px solid var(--line);
}

.list-head h2 {
    flex: 1;
    font-size: 21.8px;
    font-weight: 500;
    line-height: 43px;
}

.view-toggle {
    width: 120px;
    height: 43px;
    display: flex;
    padding: 4px;
    background-color: #f6f6f6;
    border-radius: 8px;
}

.toggle-btn {
    width: 56px;
    height: 35px;
    display: flex;
    align-items: center;
    justify-content: center;
    border-radius: 6px;
}

.toggle-btn.on {
    background-color: #fff;
}

.toggle-btn svg {
    width: 18px;
    height: 18px;
}

/* buttons */
.btn {
    height: 39px;
    display: inline-flex;
    align-items: center;
    justify-content: center;
    font-size: 15px;
    border-radius: 20px;
    white-space: nowrap;
}

.btn.primary {
    padding: 0 17px;
    background-color: var(--orange);
    color: #fff;
    font-weight: 700;
}

.btn.ghost {
    padding: 0 18px;
    background-color: #fff;
    border: 1px solid #e6e6e6;
    font-size: 15.5px;
    font-weight: 500;
    color: #222;
}

.add-provider {
    width: 165px;
    margin-left: 8px;
    gap: 12px;
}

.add-provider svg {
    width: 16px;
    height: 16px;
}

.phone {
    width: 20px;
    height: 23px;
    margin-right: 9px;
}

/* provider cards */
.card {
    position: relative;
    margin-top: 14px;
    padding: 18px;
    background-color: #fff;
    border: 1px solid var(--line);
    border-radius: 8px;
    box-shadow: 0 1px 2px rgba(0, 0, 0, 0.03);
}

.card + .card {
    margin-top: 18px;
}

.remove {
    position: absolute;
    top: -6px;
    right: -6px;
    width: 21px;
    height: 21px;
    display: flex;
    align-items: center;
    justify-content: center;
    background-color: #f4511e;
    color: #fff;
    font-size: 21px;
    line-height: 1;
    border-radius: 50%;
}

.card-top {
    display: flex;
    align-items: stretch;
    padding-bottom: 18px;
    border-bottom: 1px solid var(--line);
}

.logo-box {
    width: 86px;
    height: 86px;
    flex-shrink: 0;
    margin-right: 18px;
    border: 1px solid #efefef;
    border-radius: 6px;
}

.logo-box svg {
    display: block;
}

.home-info {
    flex: 1;
    display: flex;
    flex-direction: column;
    justify-content: center;
    padding-right: 20px;
    min-width: 0;
}

.home-info h3,
.plain-top h3 {
    font-size: 22px;
    font-weight: 500;
    line-height: 31px;
}

.address {
    display: flex;
    align-items: center;
    margin-top: 4px;
    font-size: 15px;
    line-height: 22px;
    color: #444;
}

.pin {
    width: 14px;
    height: 18px;
    margin: 0 8px 0 1px;
    color: #444;
    flex-shrink: 0;
}

.stat {
    width: 135px;
    flex-shrink: 0;
    display: flex;
    flex-direction: column;
    justify-content: center;
    padding-left: 26px;
    border-left: 1px solid var(--line);
}

.stat-label {
    font-size: 15px;
    line-height: 22px;
    color: #555;
}

.stat-value {
    margin-top: 2px;
    font-size: 27px;
    font-weight: 500;
    line-height: 33px;
    color: var(--coral);
}

.features {
    display: grid;
    grid-template-columns: repeat(3, 255px);
    padding: 14px 0;
    border-bottom: 1px solid var(--line);
}

.features ul {
    padding-right: 26px;
}

.features li {
    margin-bottom: 4px;
    font-size: 15px;
    line-height: 22px;
    color: var(--muted);
}

.tick {
    width: 14px;
    height: 14px;
    margin-right: 6px;
    vertical-align: -3px;
}

.actions {
    display: flex;
    justify-content: flex-end;
    gap: 10px;
    padding-top: 13px;
    margin-bottom: -1px;
}

/* helper box */
.helper {
    height: 513px;
    border: 1px solid #8d8d85;
    border-radius: 10px;
    overflow: hidden;
}

.helper-head {
    height: 113px;
    display: flex;
    align-items: center;
    justify-content: space-between;
    padding: 0 17px;
    background-color: var(--olive);
    color: #fff;
}

.helper-head h4 {
    font-size: 19px;
    font-weight: 700;
    line-height: 26px;
    margin-bottom: 5px;
}

.helper-head p {
    width: 305px;
    font-size: 15px;
    line-height: 22px;
}

.helper-toggle {
    width: 30px;
    height: 30px;
    display: flex;
    align-items: center;
    justify-content: center;
    background-color: #fff;
    border-radius: 50%;
}

.helper-toggle svg {
    width: 12px;
    height: 8px;
}

.helper-body {
    display: flex;
    flex-direction: column;
    gap: 8px;
    padding: 18px 18px 0;
}

.step {
    padding: 14px;
    border: 1px solid #f0f0f0;
    border-radius: 8px;
}

.step h5 {
    font-size: 17.5px;
    font-weight: 500;
    line-height: 24px;
    margin-bottom: 4px;
}

.step p {
    font-size: 15px;
    line-height: 22px;
    color: #444;
}

/* map */
.map {
    width: 384px;
    height: 719px;
    margin-top: 27px;
    border-radius: 8px;
    overflow: hidden;
}

.map svg {
    display: block;
}

.place {
    font-family: 'DejaVu Sans', sans-serif;
    font-size: 10px;
    letter-spacing: 2.2px;
    fill: #7483a8;
    stroke: #fff;
    stroke-width: 0.3px;
}

.place.grey {
    fill: #777;
}

.poi {
    font-family: 'DejaVu Sans', sans-serif;
    font-size: 10px;
    fill: #e85cb0;
}

.road-name {
    font-family: 'DejaVu Sans', sans-serif;
    font-size: 9.5px;
    fill: #444;
}

.shield-text {
    font-family: 'DejaVu Sans', sans-serif;
    font-size: 9px;
    font-weight: 700;
    fill: #f4e96b;
}

.shield-text.white {
    fill: #fff;
}

.marker-label {
    font-family: 'DejaVu Sans', sans-serif;
    font-size: 11.8px;
    fill: #222;
}

.mapbox {
    font-family: 'DejaVu Sans', sans-serif;
    font-size: 15px;
    font-weight: 700;
    fill: #999;
    stroke: #fff;
    stroke-width: 1px;
    paint-order: stroke;
}

/* logo text */
.lg-opal {
    font-size: 22px;
    font-weight: 700;
    fill: #fff;
}

.lg-health {
    font-size: 11px;
    font-weight: 700;
    fill: #3d3fc7;
}

.lg-vmch {
    font-size: 27px;
    letter-spacing: -1.8px;
    fill: #e5332a;
}

.lg-grace {
    font-size: 7.5px;
    fill: #555;
}

.lg-bupa {
    font-size: 17px;
    font-weight: 700;
    font-style: italic;
    fill: #fff;
}

.lg-aged {
    font-size: 15.5px;
    font-style: italic;
    fill: #3c7fcf;
}

.lg-vincent {
    font-family: 'Liberation Serif', serif;
    font-size: 6.5px;
    fill: #7b7bae;
}

/* more options */
.more {
    margin-top: 66px;
    width: 813px;
}

.more-title {
    font-size: 22px;
    font-weight: 500;
    line-height: 28px;
}

.more-sub {
    margin-top: 2px;
    margin-bottom: 27px;
    font-size: 17px;
    line-height: 24px;
    color: #333;
}

.card.wide {
    margin-top: 27px;
}

.more-sub + .card.wide {
    margin-top: 0;
}

.card.plain {
    height: 139px;
    margin-top: 27.6px;
}

.plain-top {
    display: flex;
    align-items: flex-start;
    height: 50px;
    border-bottom: 1px solid var(--line);
}

.plain-top h3 {
    font-weight: 400;
}

.badge {
    height: 30px;
    display: flex;
    align-items: center;
    margin: 2px 0 0 13px;
    padding: 0 8px;
    background-color: #f1f1f1;
    border-radius: 5px;
    font-size: 14.5px;
    color: #555;
}

.plain-top .address {
    margin: 7px 13px 0 auto;
}
```
